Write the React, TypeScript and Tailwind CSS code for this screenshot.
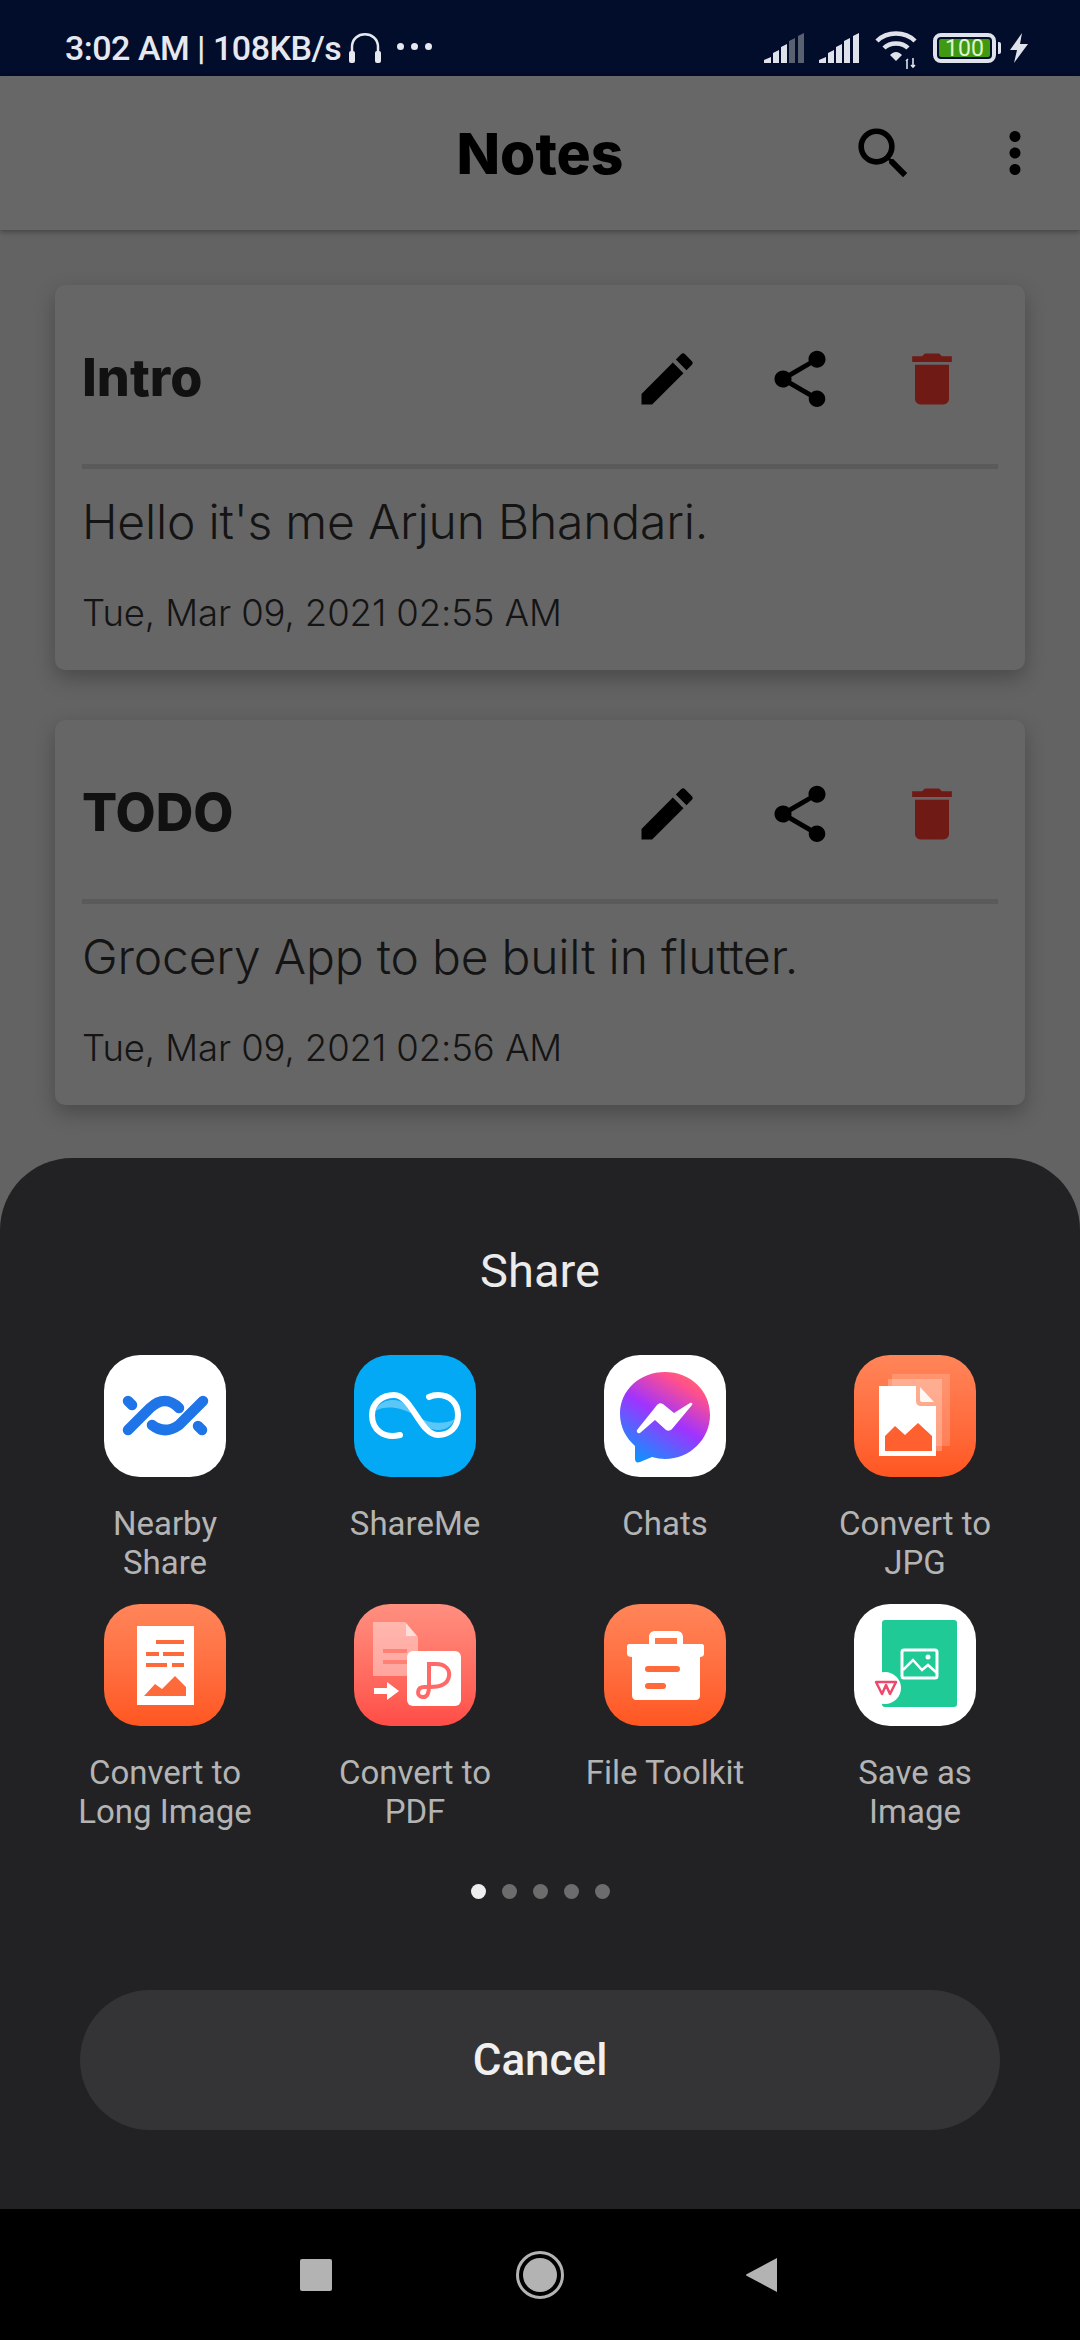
import { MdDelete, MdEdit, MdMoreVert, MdSearch, MdShare } from 'react-icons/md';
import type { ReactNode } from 'react';

const SignalBars = ({ dimFrom }: { dimFrom: number }) => {
  const bars = [
    { x: 0, w: 7, low: 24, high: 27 },
    { x: 9, w: 6, low: 17, high: 20 },
    { x: 17, w: 6, low: 11, high: 14 },
    { x: 25, w: 6, low: 5, high: 8 },
    { x: 34, w: 6, low: 0, high: 3 },
  ];
  return (
    <svg width="41" height="30" viewBox="0 0 41 30" className="block">
      {bars.map((b, i) => (
        <polygon
          key={b.x}
          points={`${b.x},${b.high} ${b.x + b.w},${b.low} ${b.x + b.w},30 ${b.x},30`}
          fill={i >= dimFrom ? '#59606f' : '#dfe2ea'}
        />
      ))}
    </svg>
  );
};

const Wifi = () => (
  <svg width="44" height="40" viewBox="0 0 44 40" className="block">
    <g fill="none" stroke="#dfe2ea" strokeWidth="4.5">
      <path d="M2 11 C12 1 30 1 40 11" />
      <path d="M9 18 C15 12 27 12 33 18" />
    </g>
    <path d="M15 25 C19 21 23 21 27 25 L21 31 Z" fill="#dfe2ea" />
    <path d="M32 30 V39 M31 31 L33 29 M38 28 V37 M36 35 L38 37 L40 35" fill="none" stroke="#dfe2ea" strokeWidth="1.6" />
  </svg>
);

const StatusBar = () => (
  <div className="h-[76px] bg-[#020c2b] flex items-center justify-between pt-[20px] pl-[65px] pr-[52px] text-[#e6e8ef] shrink-0">
    <div className="flex items-center font-['Roboto',sans-serif] font-medium text-[34px] leading-none">
      <span className="tracking-[-0.5px]">3:02 AM | 108KB/s</span>
      <svg width="34" height="32" viewBox="0 0 34 32" className="ml-[7px]">
        <path d="M4 22 V15 C4 -2 30 -2 30 15 V22" fill="none" stroke="#e6e8ef" strokeWidth="2.5" />
        <rect x="1" y="19" width="6" height="12" rx="2" fill="#e6e8ef" />
        <rect x="27" y="19" width="6" height="12" rx="2" fill="#e6e8ef" />
      </svg>
      <div className="flex gap-[7px] ml-[15px] mb-[4px]">
        <span className="w-[7px] h-[7px] rounded-full bg-[#e6e8ef]" />
        <span className="w-[7px] h-[7px] rounded-full bg-[#e6e8ef]" />
        <span className="w-[7px] h-[7px] rounded-full bg-[#e6e8ef]" />
      </div>
    </div>
    <div className="flex items-center">
      <SignalBars dimFrom={3} />
      <div className="ml-[14px]">
        <SignalBars dimFrom={5} />
      </div>
      <div className="ml-[15px] mt-[4px]">
        <Wifi />
      </div>
      <div className="ml-[14px] w-[63px] h-[30px] rounded-[8px] border-[4px] border-[#dfe2ea] p-[2px] flex">
        <div className="flex-1 bg-[#3f9a12] rounded-[2px] flex items-center justify-center font-['Roboto',sans-serif] text-[#dff5cf] text-[23px] leading-none">
          100
        </div>
      </div>
      <span className="ml-[2px] w-[3px] h-[12px] bg-[#dfe2ea] rounded-r-[2px]" />
      <svg width="18" height="30" viewBox="0 0 18 30" className="ml-[9px]">
        <path d="M12 0 L0 17 H7 L4 30 L18 11 H10 Z" fill="#dfe2ea" />
      </svg>
    </div>
  </div>
);

const AppBar = () => (
  <div className="h-[154px] bg-[#676767] flex items-center px-[32px] shrink-0 shadow-[0_2px_5px_rgba(0,0,0,0.3)] relative">
    <div className="flex-1" />
    <h1 className="font-['Inter',sans-serif] font-extrabold text-[57px] leading-none text-black">Notes</h1>
    <div className="flex-1 flex justify-end items-center gap-[65px]">
      <MdSearch size={67} color="#000" />
      <MdMoreVert size={66} color="#000" />
    </div>
  </div>
);

const NoteCard = ({ title, body, date }: { title: string; body: string; date: string }) => (
  <div className="h-[385px] rounded-[10px] bg-[#666666] shadow-[0_8px_20px_rgba(0,0,0,0.26)] px-[27px] flex flex-col">
    <div className="h-[184px] pt-[6px] flex items-center border-b-[5px] border-[#5a5a5a]">
      <h2 className="flex-1 font-['Inter',sans-serif] font-extrabold text-[52px] leading-none text-[#111111]">{title}</h2>
      <div className="flex items-center gap-[64.5px] mr-[32px] mt-[3px]">
        <MdEdit size={68} color="#000" />
        <MdShare size={68} color="#000" />
        <MdDelete size={68} color="#701a15" />
      </div>
    </div>
    <p className="mt-[26px] font-['Inter',sans-serif] font-light text-[48px] leading-[54px] tracking-[-0.2px] text-[#141414]">{body}</p>
    <p className="mt-[42px] font-['Inter',sans-serif] font-light text-[36.5px] leading-[44px] tracking-[-0.1px] text-[#141414]">{date}</p>
  </div>
);

const IconBox = ({ className, children }: { className: string; children: ReactNode }) => (
  <div className={`w-[122px] h-[122px] rounded-[36px] overflow-hidden ${className}`}>
    <svg width="122" height="122" viewBox="0 0 122 122" className="block">
      {children}
    </svg>
  </div>
);

const NearbyIcon = () => (
  <IconBox className="bg-white">
    <g fill="none" stroke="#1f75e8" strokeWidth="10.5" strokeLinecap="round">
      <path d="M24 46 L28 50" />
      <path d="M24 75 L46 53 Q61 39 75 53" />
      <path d="M48 70 Q61 80 75 70 L99 46" />
      <path d="M94 71 L98 75" />
    </g>
  </IconBox>
);

const ShareMeIcon = () => (
  <IconBox className="bg-[#03a9f4]">
    <path d="M21 56 C25 47 33 45 40 45 C50 45 56 54 60 60 C47 52 32 50 21 56 Z" fill="#ffffff" fillOpacity="0.35" />
    <path d="M101 64 C97 73 89 75 84 75 C74 75 66 67 62 61 C75 69 90 70 101 64 Z" fill="#ffffff" fillOpacity="0.35" />
    <path
      d="M46 80 C30 84 18 75 18 60 C18 48 28 40 40 40 C58 40 66 80 84 80 C96 80 104 72 104 60 C104 48 96 40 84 40 C80 40 77 41 75 42"
      fill="none"
      stroke="#ffffff"
      strokeWidth="6"
      strokeLinecap="round"
    />
  </IconBox>
);

const MessengerIcon = () => (
  <IconBox className="bg-white">
    <defs>
      <linearGradient id="msgGrad" x1="0.2" y1="1" x2="0.8" y2="0">
        <stop offset="0" stopColor="#0a95ff" />
        <stop offset="0.5" stopColor="#a033ff" />
        <stop offset="0.85" stopColor="#ff4f8e" />
        <stop offset="1" stopColor="#ff6b6b" />
      </linearGradient>
    </defs>
    <path
      d="M61 17 C36 17 16 35 16 59 C16 72 22 83 31 91 L31 104 C31 107 33 108 36 107 L48 102 C52 103 57 104 61 104 C86 104 106 84 106 60 C106 35 86 17 61 17 Z"
      fill="url(#msgGrad)"
    />
    <path d="M33 75 L53 50 C55 48 57 48 59 49 L70 58 L86 48 C88 47 89 49 88 50 L68 74 C66 76 64 76 62 75 L51 65 L36 78 C34 79 32 77 33 75 Z" fill="#ffffff" />
  </IconBox>
);

const JpgIcon = () => (
  <IconBox className="bg-gradient-to-b from-[#ff8559] to-[#ff5620]">
    <rect x="38" y="19" width="58" height="72" fill="#ffffff" fillOpacity="0.18" />
    <rect x="34" y="24" width="54" height="72" fill="#ffffff" fillOpacity="0.25" />
    <path d="M25 31 H62 V46 C62 49 64 51 67 51 H82 V101 H25 Z" fill="#ffffff" />
    <path d="M66 32 L80 47 H68 C67 47 66 46 66 45 Z" fill="#ffffff" fillOpacity="0.9" />
    <path d="M31 81 L41 71 L51 80 L64 68 L78 81 V96 H31 Z" fill="#ff6030" />
  </IconBox>
);

const LongImageIcon = () => (
  <IconBox className="bg-gradient-to-b from-[#ff8559] to-[#ff5620]">
    <rect x="33" y="22" width="57" height="79" fill="#ffffff" />
    <g fill="#ff6a3a">
      <rect x="52" y="36" width="28" height="4" />
      <rect x="42" y="48" width="13" height="4" />
      <rect x="59" y="48" width="21" height="4" />
      <rect x="42" y="59" width="21" height="4" />
      <rect x="68" y="59" width="12" height="4" />
      <path d="M40 92 L51 80 L58 85 L71 72 L82 83 V92 Z" />
    </g>
  </IconBox>
);

const PdfIcon = () => (
  <IconBox className="bg-gradient-to-b from-[#ff8f80] to-[#ff4c47]">
    <path d="M19 18 H51 L64 33 V72 H19 Z" fill="#ffffff" fillOpacity="0.4" />
    <path d="M52 19 L63 32 H52 Z" fill="#ffffff" fillOpacity="0.55" />
    <rect x="29" y="45" width="24" height="4" fill="#ff8175" />
    <rect x="29" y="56" width="24" height="4" fill="#ff8175" />
    <rect x="53" y="47" width="54" height="55" rx="6" fill="#ffffff" />
    <path d="M20 84 H33 V78 L45 87 L33 96 V90 H20 Z" fill="#ffffff" />
    <path d="M73 60 H82 C92 60 96 66 95 72 C94 80 86 83 76 83 H70 C63 83 62 92 68 93 C74 94 75 88 75 82 V60" fill="none" stroke="#ff6a68" strokeWidth="4" />
  </IconBox>
);

const ToolkitIcon = () => (
  <IconBox className="bg-gradient-to-b from-[#ff8559] to-[#ff5620]">
    <path d="M45 42 V33 C45 29 48 27 51 27 H73 C76 27 79 29 79 33 V42 H73 V34 H51 V42 Z" fill="#ffffff" />
    <path d="M25 40 H98 C99 40 100 41 100 42 V50 C100 52 98 53 96 53 V92 C96 94 94 96 92 96 H32 C30 96 28 94 28 92 V53 C25 53 23 52 23 50 V42 C23 41 24 40 25 40 Z" fill="#ffffff" />
    <rect x="41" y="62" width="35" height="6" rx="3" fill="#ff6a3a" />
    <rect x="41" y="79" width="21" height="6" rx="3" fill="#ff6a3a" />
  </IconBox>
);

const SaveImageIcon = () => (
  <IconBox className="bg-white">
    <rect x="28" y="16" width="75" height="87" rx="3" fill="#1fca96" />
    <rect x="48" y="46" width="35" height="28" rx="2" fill="none" stroke="#ffffff" strokeWidth="3" />
    <path d="M49 66 L59 56 L68 66 L74 61 L83 69" fill="none" stroke="#ffffff" strokeWidth="2.5" />
    <circle cx="74" cy="53" r="2.5" fill="#ffffff" />
    <circle cx="31" cy="84" r="16" fill="#ffffff" />
    <path d="M22 78 H42 L36 90 L32 81 L28 90 Z" fill="none" stroke="#f0486a" strokeWidth="2.5" strokeLinejoin="round" />
  </IconBox>
);

const shareItems: { lines: string[]; icon: ReactNode }[] = [
  { lines: ['Nearby', 'Share'], icon: <NearbyIcon /> },
  { lines: ['ShareMe'], icon: <ShareMeIcon /> },
  { lines: ['Chats'], icon: <MessengerIcon /> },
  { lines: ['Convert to', 'JPG'], icon: <JpgIcon /> },
  { lines: ['Convert to', 'Long Image'], icon: <LongImageIcon /> },
  { lines: ['Convert to', 'PDF'], icon: <PdfIcon /> },
  { lines: ['File Toolkit'], icon: <ToolkitIcon /> },
  { lines: ['Save as', 'Image'], icon: <SaveImageIcon /> },
];

const ShareSheet = () => (
  <div className="absolute inset-x-0 bottom-0 h-[1051px] bg-[#222224] rounded-t-[72px] flex flex-col items-center font-['Roboto',sans-serif]">
    <p className="mt-[86px] text-[47px] leading-[54px] text-[#ebebeb]">Share</p>
    <div className="mt-[57px] w-[1000px] grid grid-cols-4 auto-rows-[249px]">
      {shareItems.map((item) => (
        <div key={item.lines.join(' ')} className="flex flex-col items-center">
          {item.icon}
          <div className="mt-[27px] text-center text-[33px] leading-[39px] text-[#b4b4b4]">
            {item.lines.map((line) => (
              <div key={line}>{line}</div>
            ))}
          </div>
        </div>
      ))}
    </div>
    <div className="mt-[31px] flex gap-[16px]">
      <span className="w-[15px] h-[15px] rounded-full bg-[#eeeeee]" />
      <span className="w-[15px] h-[15px] rounded-full bg-[#6c6c6c]" />
      <span className="w-[15px] h-[15px] rounded-full bg-[#6c6c6c]" />
      <span className="w-[15px] h-[15px] rounded-full bg-[#6c6c6c]" />
      <span className="w-[15px] h-[15px] rounded-full bg-[#6c6c6c]" />
    </div>
    <button className="mt-[91px] w-[920px] h-[140px] rounded-full bg-[#343436] text-[44px] font-medium text-[#f0f0f0]">
      Cancel
    </button>
  </div>
);

const NavBar = () => (
  <div className="h-[131px] bg-black flex items-center justify-center shrink-0 pr-[3px]">
    <div className="flex items-center">
      <span className="w-[32px] h-[32px] rounded-[2px] bg-[#b3b3b3]" />
      <span className="ml-[184px] w-[48px] h-[48px] rounded-full border-[3px] border-[#b3b3b3] p-[4px] flex">
        <span className="flex-1 rounded-full bg-[#b3b3b3]" />
      </span>
      <svg width="32" height="36" viewBox="0 0 32 36" className="ml-[181px]">
        <path d="M32 1 V35 L2 19 Q0 18 2 17 Z" fill="#b3b3b3" />
      </svg>
    </div>
  </div>
);

export default function App() {
  return (
    <div className="w-[1080px] h-[2340px] flex flex-col overflow-hidden bg-[#636363]">
      <StatusBar />
      <AppBar />
      <div className="flex-1 relative px-[55px] pt-[55px]">
        <div className="flex flex-col gap-[50px]">
          <NoteCard title="Intro" body="Hello it's me Arjun Bhandari." date="Tue, Mar 09, 2021 02:55 AM" />
          <NoteCard title="TODO" body="Grocery App to be built in flutter." date="Tue, Mar 09, 2021 02:56 AM" />
        </div>
        <ShareSheet />
      </div>
      <NavBar />
    </div>
  );
}
